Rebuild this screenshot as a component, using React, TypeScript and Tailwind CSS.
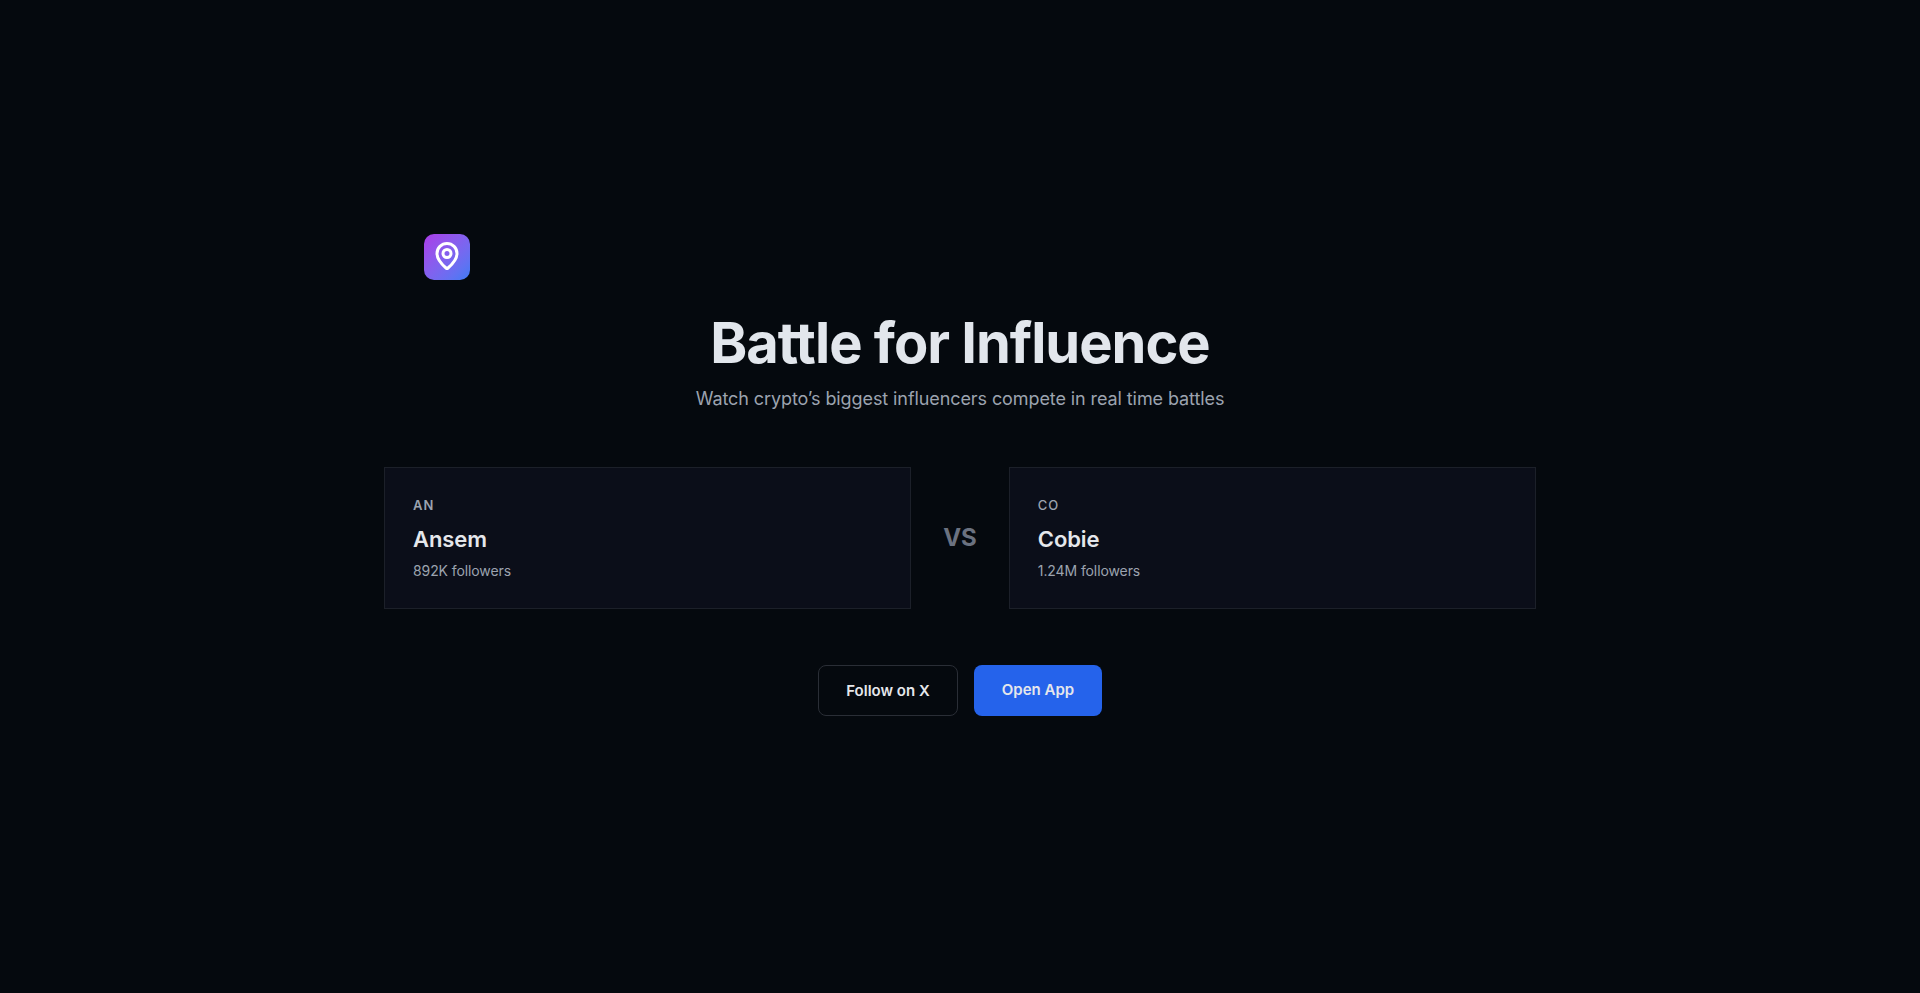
import React from "react";

function Card({ tag, name, followers, tagWeight }: { tag: string; name: string; followers: string; tagWeight: string }) {
  return (
    <div className="flex-1 h-[142px] border border-[#1c2029] bg-[#0b0e19] pl-[28px] pt-[29px]">
      <div className={`text-[13px] leading-[16px] tracking-[1px] text-[#9ca3af] ${tagWeight}`}>{tag}</div>
      <div className="mt-[12px] text-[22px] leading-[28px] tracking-[-0.1px] font-semibold text-[#e5e7eb]">{name}</div>
      <div className="mt-[8px] text-[14px] leading-[20px] tracking-[-0.1px] text-[#9ca3af]">{followers}</div>
    </div>
  );
}

export default function App() {
  return (
    <div className="min-h-[993px] bg-[#05090e] font-['Inter',sans-serif] pt-[234px]">
      <div className="mx-auto w-[1152px]">
        <div className="px-[40px]">
          <div className="w-[46px] h-[46px] rounded-[10px] bg-gradient-to-br from-[#aa3ae8] to-[#3a7cf5] flex items-center justify-center pb-[3px]">
            <svg width="30" height="30" viewBox="0 0 24 24" fill="none" stroke="white" strokeWidth="2.4" strokeLinecap="round" strokeLinejoin="round">
              <path d="M20 10c0 4.993-5.539 10.193-7.399 11.799a1 1 0 0 1-1.202 0C9.539 20.193 4 14.993 4 10a8 8 0 0 1 16 0" />
              <circle cx="12" cy="10" r="3.2" />
            </svg>
          </div>
        </div>
        <h1 className="mt-[31px] text-center text-[56px] leading-[64px] tracking-[-1px] font-bold text-[#e2e6ec]">Battle for Influence</h1>
        <p className="mt-[10px] text-center text-[18px] leading-[28px] tracking-[-0.09px] text-[#9ca3af]">Watch crypto’s biggest influencers compete in real time battles</p>
        <div className="mt-[54px] flex items-center gap-[32px]">
          <Card tag="AN" name="Ansem" followers="892K followers" tagWeight="font-semibold" />
          <div className="text-[24px] leading-[32px] font-bold text-[#6b7280]">VS</div>
          <Card tag="CO" name="Cobie" followers="1.24M followers" tagWeight="font-medium" />
        </div>
        <div className="mt-[56px] flex justify-center gap-[16px]">
          <button className="h-[51px] w-[140px] rounded-[8px] border border-[#2a2e36] bg-[#05090e] pt-[2px] text-[15px] font-semibold text-[#e5e7eb]">Follow on X</button>
          <button className="h-[51px] w-[128px] rounded-[8px] bg-[#2563eb] text-[15px] font-semibold text-[#e5e7eb]">Open App</button>
        </div>
      </div>
    </div>
  );
}
